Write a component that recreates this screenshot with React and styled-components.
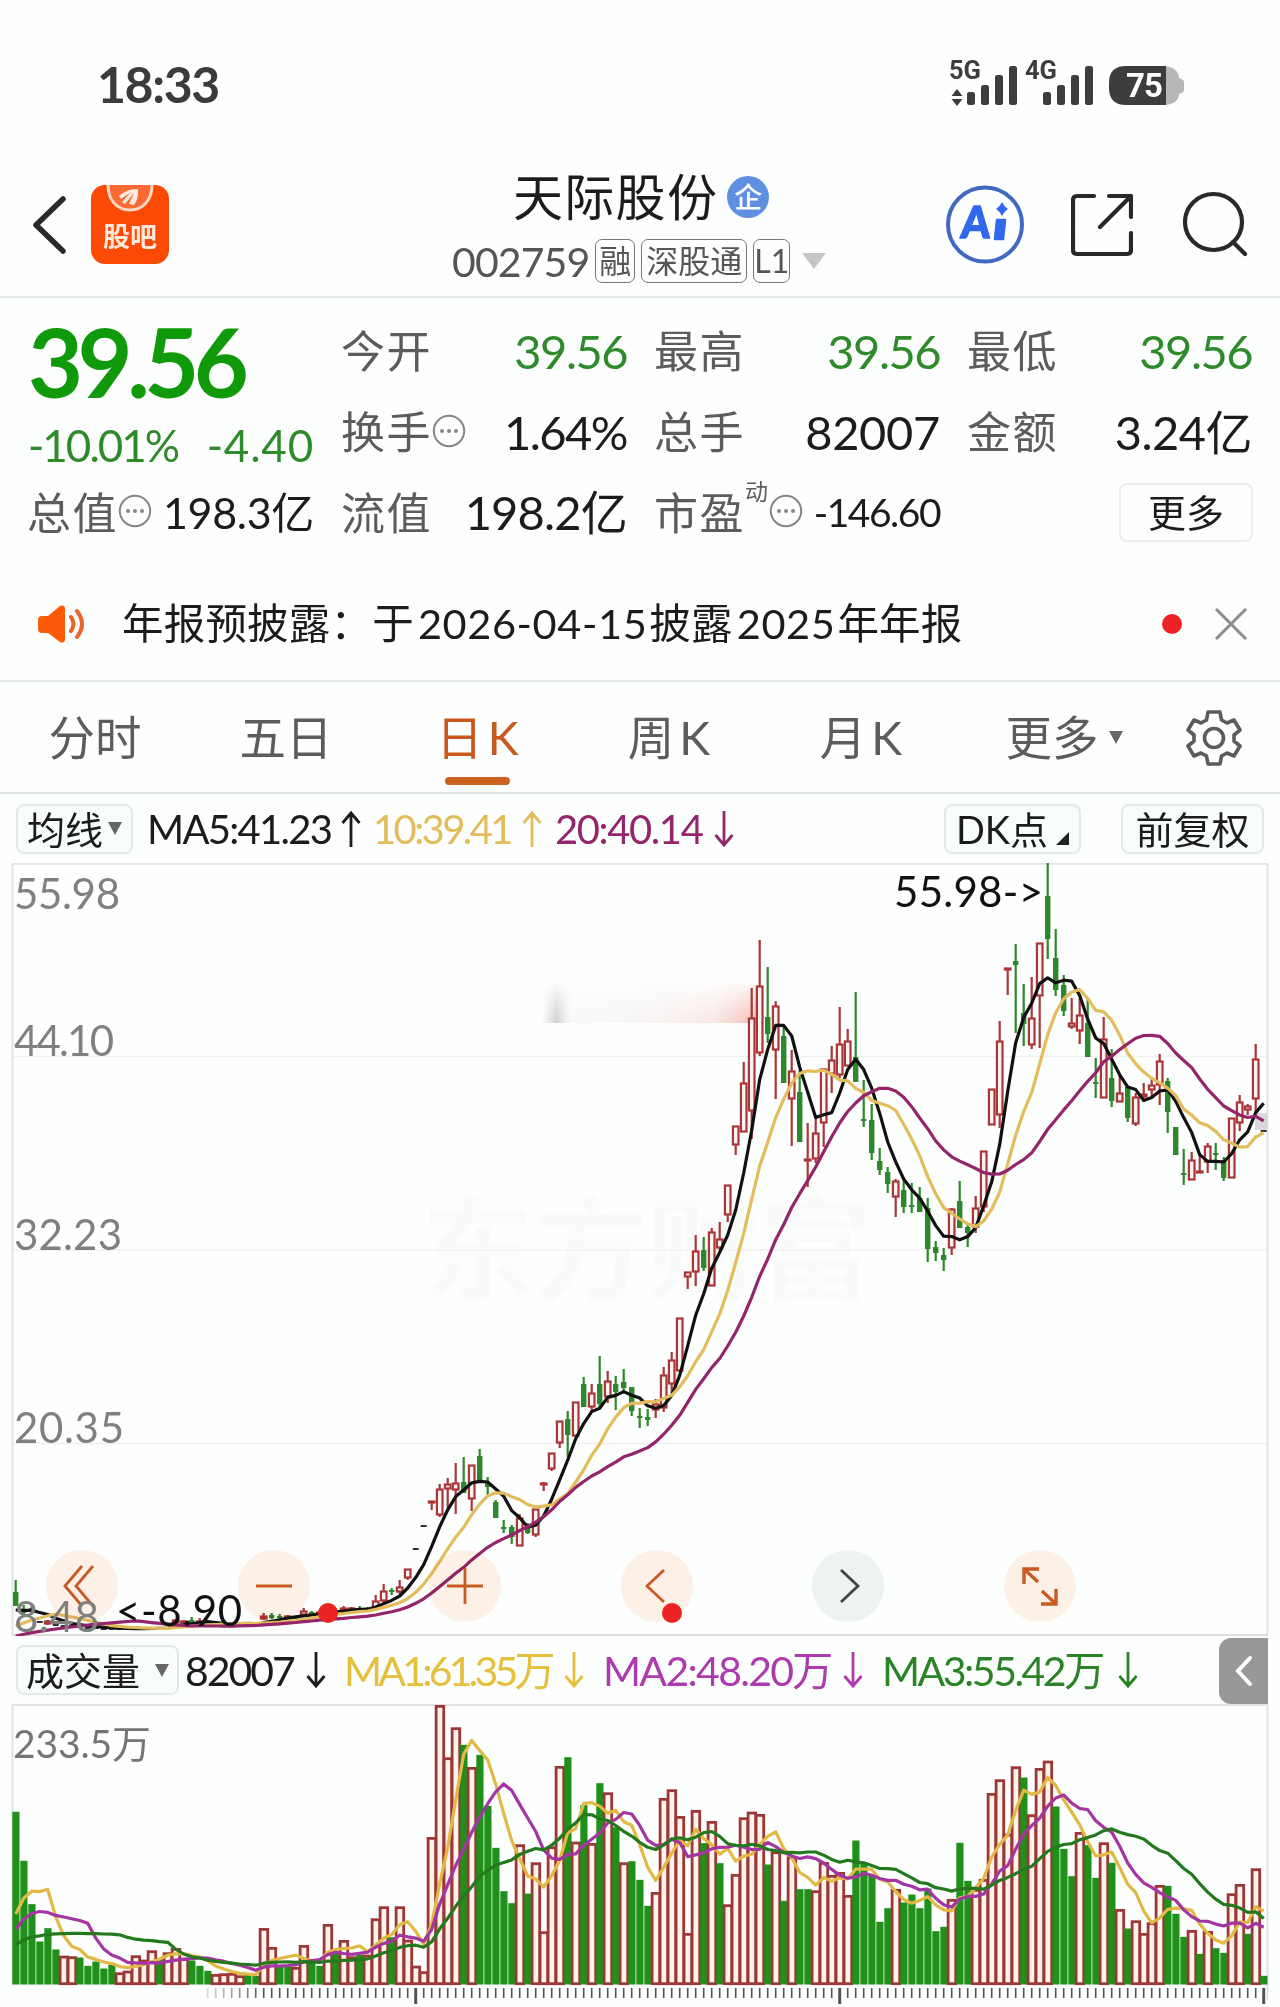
import React from "react";
import styled, {createGlobalStyle, css} from 'styled-components';

const GlobalStyle = createGlobalStyle`
  * {
    box-sizing: border-box;
  }

  body {
    margin: 0;
    background: #fdfefe;
    font-family: Lato, "Noto Sans CJK SC", sans-serif;
    color: #1c1c1c;
  }
`

const Screen = styled.main`
  width: 1280px;
  height: 2007px;
  overflow: hidden;
  display: flex;
  flex-direction: column;
  line-height: 1;
`

/* one piece of text: size, tracking, colour and weight vary */
const Text = styled.span`
  font-size: ${p => p.$size || 45}px;
  letter-spacing: ${p => p.$gap || 0}px;
  color: ${p => p.$color || '#1c1c1c'};
  font-weight: ${p => p.$weight || 400};
  line-height: 1;
  white-space: nowrap;
`

const StatusBar = styled.header`
  height: 168px;
  padding: 0 98px 0 97px;
  display: flex;
  align-items: center;
  justify-content: space-between;
`

const NavBar = styled.nav`
  height: 130px;
  display: grid;
  grid-template-columns: 91px 353px 502px 125px 112px 97px;
  border-bottom: 2px solid #e6e9e9;

  > svg {
    margin-top: 17px;
  }
`

const BackButton = styled.div`
  padding: 27px 0 0 32px;
`

const AppIcon = styled.div`
  width: 78px;
  height: 79px;
  margin-top: 17px;
  border-radius: 14px;
  background: #fb4a05;
  overflow: hidden;
  display: flex;
  flex-direction: column;
  align-items: center;
  color: #ffe9dc;
  font-size: 27px;
  font-weight: 700;

  span {
    margin-top: 8px;
    font-family: "Noto Sans CJK SC", sans-serif;
  }
`

const Title = styled.div`
  display: flex;
  flex-direction: column;
`

const TitleRow = styled.div`
  height: 62px;
  padding: 0 0 3px 69px;
  display: flex;
  align-items: center;
  gap: 9px;
`

const Badge = styled.span`
  width: 42px;
  height: 42px;
  border-radius: 50%;
  background: #5f8fe0;
  color: white;
  font-size: 28px;
  font-weight: 500;
  display: flex;
  align-items: center;
  justify-content: center;
  line-height: 1;
`

const CodeRow = styled.div`
  height: 62px;
  padding: 1px 0 0 8px;
  display: flex;
  align-items: center;
`

const Tag = styled.span`
  width: ${p => p.$width}px;
  height: 44px;
  margin-left: ${p => p.$left || 6}px;
  border: 1.5px solid #777;
  border-radius: 7px;
  color: #555;
  font-size: ${p => p.$size || 32}px;
  display: flex;
  align-items: center;
  justify-content: center;
  white-space: nowrap;
`

const Triangle = styled.i`
  width: 0;
  height: 0;
  flex: none;
  border-left: ${p => p.$w / 2}px solid transparent;
  border-right: ${p => p.$w / 2}px solid transparent;
  border-top: ${p => p.$h}px solid ${p => p.$color || '#666'};
  margin-left: ${p => p.$left || 0}px;
`

const Quote = styled.section`
  height: 262px;
  display: grid;
  grid-template-columns: 286px 285px 285px 284px;
  column-gap: 28px;
  padding: 13px 27px 0 28px;
`

const PriceColumn = styled.div`
  display: grid;
  grid-template-rows: 102px 65px 70px;
  align-items: center;
`

const StatColumn = styled.div`
  display: grid;
  grid-template-rows: 81px 81px 80px;
  align-items: center;
`

const Stat = styled.div`
  display: flex;
  align-items: center;
  justify-content: space-between;
`

const Label = styled.span`
  display: flex;
  align-items: center;
  font-size: 44px;
  letter-spacing: 1.5px;
  margin-left: -1px;
  color: #5c5c5c;
  white-space: nowrap;

  svg {
    margin-top: -3px;
  }

  sup {
    font-size: 23px;
    letter-spacing: 0;
    align-self: flex-start;
    line-height: 1;
    margin: -11px 1px 0 0;
  }
`

const MoreButton = styled.button`
  width: 134px;
  height: 59px;
  margin: 0 -1px 0 auto;
  border: 2px solid #eceeee;
  border-radius: 8px;
  background: transparent;
  font: 400 38px "Noto Sans CJK SC", sans-serif;
  color: #1c1c1c;
  padding: 0 0 3px;
  line-height: 1;
`

const Notice = styled.section`
  height: 123px;
  padding: 8px 33px 0 36px;
  display: flex;
  align-items: center;
  border-bottom: 2px solid #e6e9e9;
`

const NoticeText = styled.p`
  margin: 0 0 0 36px;
  width: 1040px;
  font-size: 41.5px;
  letter-spacing: .2px;
  white-space: nowrap;

  b {
    font-weight: 400;
    letter-spacing: ${p => p.$numberGap}px;
    margin: 0 2px 0 4px;
  }
`

const RedDot = styled.i`
  width: 20px;
  height: 20px;
  flex: none;
  border-radius: 50%;
  background: #ec2224;
`

const Tabs = styled.nav`
  height: 112px;
  padding: 0 24px 0 0;
  display: grid;
  grid-template-columns: 190px 192px 191px 192px 192px 214px 1fr;
  border-bottom: 2px solid #dfe2e2;
`

const tabActive = css`
  color: #c9581c;

  &::after {
    content: '';
    position: absolute;
    bottom: 7px;
    left: 63px;
    width: 65px;
    height: 8px;
    border-radius: 4px;
    background: #cd6120;
  }
`

const Tab = styled.div`
  position: relative;
  display: flex;
  align-items: center;
  justify-content: center;
  gap: ${p => p.$spaced ? 5 : 0}px;
  padding-top: 1px;
  font-size: 46.5px;
  color: #5c5c5c;
  white-space: nowrap;
  ${p => p.$active && tabActive}
`

const Legend = styled.div`
  height: ${p => p.$height}px;
  display: flex;
  align-items: center;
  padding: 0 16px;
  position: relative;
`

const Chip = styled.span`
  width: ${p => p.$width}px;
  height: 50px;
  flex: none;
  display: flex;
  align-items: center;
  justify-content: center;
  border: 2px solid #e3e8e9;
  border-radius: 8px;
  background: #f9fcfd;
  font-size: 38px;
  white-space: nowrap;
  margin-left: ${p => p.$left || 0}px;
`

const LegendItem = styled.span`
  width: ${p => p.$width}px;
  flex: none;
  display: flex;
  align-items: center;
  justify-content: space-between;
  margin-left: ${p => p.$left}px;
  color: ${p => p.$color || '#1c1c1c'};
  font-size: ${p => p.$size || 40}px;
  letter-spacing: ${p => p.$gap || 0}px;
  white-space: nowrap;

  svg {
    flex: none;
  }
`

const Drawer = styled.div`
  position: absolute;
  right: 12px;
  top: 2px;
  width: 49px;
  height: 66px;
  border-radius: 12px 0 0 12px;
  background: #989898;
  display: flex;
  align-items: center;
  justify-content: center;
`

const ChartArea = styled.section`
  position: relative;
  height: 773px;

  > svg {
    display: block;
  }
`

const Controls = styled.div`
  position: absolute;
  left: 46px;
  top: 687px;
  display: flex;
  gap: 119.5px;
`

/* the disc is multiplied so that the chart lines stay clear through it */
const RoundButton = styled.div`
  position: relative;
  width: 72px;
  height: 72px;

  &::before {
    content: '';
    position: absolute;
    inset: 0;
    border-radius: 50%;
    background: ${p => p.$muted ? '#f1f3f3' : '#fef1e8'};
    mix-blend-mode: multiply;
  }

  svg {
    display: block;
    position: relative;
  }

  ${RedDot} {
    position: absolute;
    left: ${p => p.$dot || 0}px;
    top: 53px;
  }
`

const NotesLayer = styled.svg`
  position: absolute;
  left: 0;
  top: 0;
  overflow: visible;
`

const VolumeArea = styled.section`
  height: 303px;

  svg {
    display: block;
  }
`

const INK = '#111'
const GOLD = '#e3bc5c'
const WINE = '#94256a'
const VIOLET = '#a436a4'
const LEAF = '#24791f'

const FIRST_X = 15.7
const STEP = 8
const xOf = (i) => FIRST_X + i * STEP

// Candles: [high, body top, body bottom, low, kind], kind 1 rise, -1 fall, 0 flat
const candles = [
    [1580, 1592, 1606, 1606, -1], [1605, 1609, 1613, 1615, -1], [1606, 1608, 1611, 1613, -1], [1620, 1621, 1622, 1623, 0],
    [1620, 1621, 1624, 1625, 1], [1623, 1624, 1625, 1625, 0], [1624, 1625, 1626, 1626, 0], [1624, 1625, 1626, 1626, 0],
    [1625, 1626, 1627, 1627, 0], [1626, 1627, 1628, 1628, 0], [1626, 1627, 1628, 1628, 0], [1627, 1628, 1629, 1629, 0],
    [1627, 1628, 1629, 1630, -1], [1627, 1628, 1629, 1630, 0], [1627, 1628, 1629, 1630, 0], [1627, 1628, 1629, 1629, 0],
    [1627, 1628, 1629, 1629, 0], [1627, 1628, 1629, 1630, 0], [1626, 1627, 1628, 1629, 0], [1625, 1627, 1628, 1629, 0],
    [1619, 1620, 1623, 1624, 1], [1620, 1621, 1623, 1625, 1], [1617, 1620, 1623, 1625, -1], [1618, 1621, 1624, 1626, 1],
    [1622, 1623, 1624, 1625, 0], [1622, 1624, 1625, 1627, 1], [1623, 1625, 1626, 1627, 1], [1623, 1625, 1626, 1627, 1],
    [1622, 1624, 1625, 1626, 0], [1622, 1624, 1625, 1625, 0], [1621, 1623, 1624, 1625, 0], [1613, 1616, 1619, 1620, 1],
    [1613, 1615, 1618, 1619, -1], [1614, 1616, 1617, 1619, -1], [1615, 1616, 1617, 1618, 1], [1616, 1617, 1617, 1618, -1],
    [1608, 1611, 1615, 1616, 1], [1611, 1612, 1614, 1615, -1], [1610, 1612, 1613, 1614, 1], [1607, 1610, 1612, 1614, 1],
    [1608, 1610, 1612, 1613, -1], [1606, 1608, 1610, 1611, 1], [1607, 1608, 1609, 1611, 1], [1606, 1608, 1609, 1611, -1],
    [1607, 1609, 1611, 1612, 1], [1595, 1601, 1608, 1610, 1], [1584, 1591, 1601, 1603, 1], [1588, 1590, 1592, 1595, -1],
    [1580, 1587, 1592, 1594, 1], [1569, 1569, 1578, 1580, 1], [1549, 1548, 1550, 1549, 0], [1526, 1525, 1527, 1526, 0],
    [1501, 1501, 1503, 1510, 1], [1484, 1489, 1515, 1517, 1], [1478, 1484, 1489, 1508, 1], [1463, 1483, 1490, 1514, 1],
    [1457, 1482, 1493, 1493, -1], [1465, 1465, 1499, 1511, 1], [1449, 1456, 1482, 1482, -1], [1477, 1483, 1487, 1495, -1],
    [1500, 1502, 1518, 1518, -1], [1520, 1527, 1529, 1533, -1], [1525, 1527, 1537, 1544, -1], [1514, 1518, 1546, 1546, 1],
    [1523, 1525, 1533, 1534, -1], [1509, 1509, 1535, 1537, 1], [1482, 1483, 1485, 1491, 1], [1453, 1453, 1469, 1471, 1],
    [1421, 1421, 1443, 1448, 1], [1411, 1419, 1435, 1457, -1], [1402, 1402, 1436, 1437, 1], [1377, 1384, 1407, 1407, -1],
    [1384, 1393, 1407, 1411, 1], [1356, 1384, 1404, 1408, -1], [1371, 1381, 1397, 1403, 1], [1376, 1384, 1392, 1410, -1],
    [1369, 1382, 1388, 1392, -1], [1387, 1387, 1411, 1416, -1], [1408, 1416, 1418, 1428, -1], [1409, 1417, 1420, 1426, -1],
    [1399, 1404, 1410, 1418, 1], [1367, 1375, 1408, 1412, 1], [1352, 1360, 1384, 1393, 1], [1318, 1318, 1371, 1371, 1],
    [1272, 1272, 1277, 1289, 1], [1235, 1251, 1272, 1286, 1], [1237, 1250, 1268, 1271, -1], [1228, 1232, 1286, 1286, 1],
    [1222, 1239, 1248, 1250, 1], [1185, 1185, 1215, 1222, 1], [1126, 1126, 1145, 1155, 1], [1062, 1083, 1132, 1132, 1],
    [988, 1018, 1111, 1139, 1], [940, 986, 1053, 1056, 1], [967, 1017, 1034, 1043, -1], [1001, 1006, 1050, 1099, 1],
    [1025, 1036, 1083, 1083, -1], [1050, 1071, 1099, 1146, 1], [1070, 1092, 1142, 1142, -1], [1123, 1159, 1161, 1187, 1],
    [1118, 1133, 1159, 1163, 1], [1068, 1069, 1123, 1147, 1], [1046, 1060, 1074, 1093, 1], [1007, 1044, 1075, 1078, 1],
    [1029, 1041, 1066, 1066, 1], [992, 1057, 1082, 1082, -1], [1080, 1119, 1121, 1127, -1], [1104, 1120, 1153, 1160, -1],
    [1148, 1161, 1170, 1175, -1], [1167, 1172, 1184, 1193, -1], [1179, 1181, 1197, 1217, 1], [1178, 1190, 1207, 1213, -1],
    [1183, 1205, 1207, 1213, -1], [1187, 1198, 1212, 1212, -1], [1198, 1208, 1249, 1262, -1], [1241, 1247, 1253, 1261, -1],
    [1248, 1255, 1260, 1271, -1], [1208, 1209, 1248, 1255, 1], [1181, 1201, 1228, 1228, -1], [1223, 1227, 1233, 1247, -1],
    [1196, 1208, 1227, 1233, 1], [1151, 1151, 1207, 1212, 1], [1089, 1089, 1125, 1125, 1], [1021, 1041, 1115, 1128, 1],
    [968, 968, 969, 995, 1], [944, 961, 965, 1033, -1], [984, 1013, 1024, 1046, -1], [977, 1018, 1045, 1049, 1],
    [943, 943, 996, 1048, 1], [863, 896, 939, 959, -1], [929, 958, 990, 996, -1], [975, 985, 1011, 1016, -1],
    [998, 1023, 1027, 1029, 1], [998, 1015, 1031, 1044, 1], [998, 1023, 1057, 1057, -1], [1058, 1082, 1084, 1098, -1],
    [1017, 1039, 1098, 1098, 1], [1049, 1078, 1101, 1107, -1], [1075, 1093, 1102, 1102, 1], [1087, 1087, 1118, 1122, -1],
    [1093, 1097, 1124, 1126, 1], [1083, 1094, 1097, 1100, 1], [1077, 1085, 1090, 1096, 1], [1054, 1061, 1085, 1105, 1],
    [1078, 1081, 1112, 1133, -1], [1127, 1127, 1155, 1155, -1], [1149, 1173, 1175, 1185, -1], [1152, 1160, 1180, 1180, 1],
    [1153, 1171, 1173, 1173, 1], [1143, 1146, 1162, 1173, 1], [1143, 1153, 1155, 1170, -1], [1157, 1160, 1178, 1181, -1],
    [1118, 1118, 1178, 1178, 1], [1095, 1102, 1123, 1131, 1], [1104, 1106, 1110, 1115, 1], [1044, 1059, 1099, 1113, 1],
    [1131, 1130, 1132, 1131, 0],
]

// closes of the sessions just before the first visible candle
const earlierCloses = [
    ...Array(10).fill(1646), ...Array(5).fill(1642), ...Array(4).fill(1611),
]

// Volumes, full scale 838 = 233.5万; negative marks a falling day
const volumes = [
    -518, -371, -241, -129, -169, -105, 86, 84, -81, -56, -69, -48, -59, 36, 41, 87, 74, 102, -79, 96,
    109, 79, -72, -56, -41, 31, 33, 34, 27, -29, -26, 169, 112, -54, -54, 52, 118, -76, -56, 181,
    -94, 133, 84, -89, 89, 198, 234, -142, 234, 134, 56, 39, 442, 838, 681, 771, -719, 652, -689, -536,
    -410, -280, -244, 420, -273, 366, 159, 414, 655, -682, 428, -538, 424, -604, 576, -472, 366, -370, -314, -236,
    277, 559, 585, 505, 154, 523, -424, 490, -364, 240, 331, 501, 518, 511, -360, 399, -251, 384, -286, -286,
    282, 367, 328, 337, 268, -432, -366, -326, -188, -229, 286, -246, -270, -229, -288, -160, -173, 256, -425, -311,
    286, 316, 574, 615, 452, 654, -621, 510, 649, 671, -534, -407, -325, 457, -418, -320, 426, -365, 226, -168,
    192, 154, 186, 298, -296, -212, -143, 163, -92, 160, -109, -95, 273, 301, -152, 348, -26,
]

const earlierVolumes = [
    67, 67, 67, 74, 74, 74, 74, 74, 74, 74, 70, 70, 70, 195, 195, 135, 135, 135, 135,
]

const VOL_BASE = 1984.5
const volY = (v) => VOL_BASE - v / 3

function movingAverage(history, values, days) {
    const all = [...history, ...values]
    return values.map((_, i) => {
        const end = i + history.length + 1
        return all.slice(end - days, end).reduce((a, b) => a + b, 0) / days
    })
}

const toPoints = (ys) => ys.map((y, i) => `${xOf(i)},${y.toFixed(1)}`).join(' ')

const closes = candles.map(([, top, bottom, , kind]) => kind > 0 ? top : kind < 0 ? bottom : (top + bottom) / 2)
const absVolumes = volumes.map(Math.abs)

const Line = ({ys, color}) => (
    <polyline points={toPoints(ys)} fill="none" stroke={color} strokeWidth="3.2" strokeLinejoin="round"/>
)

const Candle = ({i, data}) => {
    const [high, top, bottom, low, kind] = data
    const x = xOf(i)
    if (kind === 0) return <rect x={x - 3} y={top} width="6" height="2" fill="#333"/>
    if (kind < 0) return (
        <g fill="#2c882b">
            <rect x={x - 1.1} y={high} width="2.2" height={Math.max(low - high, 1)}/>
            <rect x={x - 2.7} y={top} width="5.4" height={Math.max(bottom - top, 2)}/>
        </g>
    )
    return (
        <g stroke="#a93638" strokeWidth="2.2" fill="none">
            <path d={`M${x} ${high}V${top}M${x} ${bottom}V${low}`}/>
            <rect x={x - 2.8} y={top + .5} width="5.6" height={Math.max(bottom - top - 1, 1)} fill="#fff3f1"/>
        </g>
    )
}

const AxisLabel = ({y, x = 14, width = 106, color = '#808080', size = 42, children}) => (
    <text x={x} y={y} fontSize={size} fill={color} textLength={width}>{children}</text>
)

function PriceChart() {
    return (
        <svg width="1280" height="773" viewBox="0 863 1280 773">
            <defs>
                <linearGradient id="smudge">
                    <stop offset="0" stopColor="#8a8a8a" stopOpacity="0"/>
                    <stop offset=".07" stopColor="#8a8a8a" stopOpacity=".4"/>
                    <stop offset=".14" stopColor="#ccc" stopOpacity=".1"/>
                    <stop offset=".5" stopColor="#e0c0bb" stopOpacity=".15"/>
                    <stop offset=".8" stopColor="#f0a59a" stopOpacity=".25"/>
                    <stop offset="1" stopColor="#f0705f" stopOpacity=".5"/>
                </linearGradient>
                <linearGradient id="fadeDown" x2="0" y2="1">
                    <stop offset="0" stopColor="#fff" stopOpacity=".1"/>
                    <stop offset="1" stopColor="#fff"/>
                </linearGradient>
                <mask id="smudgeMask">
                    <rect x="542" y="984" width="214" height="39" fill="url(#fadeDown)"/>
                </mask>
            </defs>
            <text x="422" y="1292" fontSize="112" fontWeight="700" fill="#f9fafa" textLength="450">东方财富</text>
            <path d="M12.5 1056.5H1267M12.5 1250H1267M12.5 1443.5H1267" stroke="#eff1f1" strokeWidth="1.5"/>
            <path d="M12.5 1636V863.8H1267.5V1636" fill="none" stroke="#e1e3e4" strokeWidth="2"/>
            <path d="M12 1635H1268" stroke="#dcdede" strokeWidth="2"/>
            <AxisLabel y={909}>55.98</AxisLabel>
            <AxisLabel y={1056} width={100}>44.10</AxisLabel>
            <AxisLabel y={1250} width={108}>32.23</AxisLabel>
            <AxisLabel y={1443} width={110}>20.35</AxisLabel>
            <rect x="542" y="984" width="214" height="39" fill="url(#smudge)" mask="url(#smudgeMask)"/>
            {candles.map((c, i) => <Candle key={i} i={i} data={c}/>)}
            <rect x="1255" y="1113" width="12" height="17" fill="#cfc6d2" opacity=".7"/>
            <Line ys={movingAverage(earlierCloses, closes, 5)} color={INK}/>
            <Line ys={movingAverage(earlierCloses, closes, 10)} color={GOLD}/>
            <Line ys={movingAverage(earlierCloses, closes, 20)} color={WINE}/>
        </svg>
    )
}

function ChartNotes() {
    return (
        <NotesLayer width="1280" height="785" viewBox="0 863 1280 785">
            <AxisLabel y={1632} width={85}>8.48</AxisLabel>
            <AxisLabel x={116} y={1626} width={126} color={INK}>{'<-8.90'}</AxisLabel>
            <AxisLabel x={894} y={907} width={149} color={INK}>{'55.98->'}</AxisLabel>
        </NotesLayer>
    )
}

function VolumeChart() {
    return (
        <svg width="1280" height="303" viewBox="0 1704 1280 303">
            <path d="M12.5 1985V1705H1267.5V2000" fill="none" stroke="#e1e3e4" strokeWidth="2"/>
            {volumes.map((v, i) => v < 0
                ? <rect key={i} x={xOf(i) - 3.4} y={volY(-v)} width="7.2" height={-v / 3} fill="#1f9019"/>
                : <rect key={i} x={xOf(i) - 3.6} y={volY(v) + 1.2} width="7.6" height={Math.max(v / 3 - 2, 1)}
                        fill="#fff3ee" stroke="#9c3836" strokeWidth="2.8"/>
            )}
            <Line ys={movingAverage(earlierVolumes, absVolumes, 5).map(volY)} color="#e2b944"/>
            <Line ys={movingAverage(earlierVolumes, absVolumes, 10).map(volY)} color={VIOLET}/>
            <Line ys={movingAverage(earlierVolumes, absVolumes, 20).map(volY)} color={LEAF}/>
            <AxisLabel x={13} y={1758} width={138} size={39} color="#757575">233.5万</AxisLabel>
            {volumes.map((_, i) => i > 23 && (
                [50, 103, 156].includes(i)
                    ? <rect key={i} x={xOf(i) - 1.5} y="1988" width="3" height="16" fill="#555"/>
                    : <rect key={i} x={xOf(i) - .8} y="1988" width="1.6" height="10" fill="#555"
                            opacity={Math.min(1, (i - 22) / 9)}/>
            ))}
        </svg>
    )
}

const Arrow = ({up}) => (
    <svg width="20" height="38" viewBox="0 0 20 38" fill="none" stroke="currentColor" strokeWidth="2.8">
        {up ? <path d="M10 37V3M1.5 13L10 3l8.500 10"/> : <path d="M10 1v34M1.500 25L10 35l8.500-10"/>}
    </svg>
)

const Info = () => (
    <svg width="34" height="34" viewBox="0 0 34 34" fill="none" stroke="#858585" strokeWidth="2">
        <circle cx="17" cy="17" r="15.200"/>
        <path d="M10 17h.01M17 17h.01M24 17h.01" strokeWidth="4" strokeLinecap="round"/>
    </svg>
)

const Signal = ({x}) => (
    <g fill="#3d3d3d">
        <rect x={x} y="39" width="8" height="13" rx="2.500"/>
        <rect x={x + 14} y="32" width="8" height="20" rx="2.500"/>
        <rect x={x + 28} y="22" width="8" height="30" rx="2.500"/>
        <rect x={x + 42} y="13" width="8" height="39" rx="2.500"/>
    </g>
)

const StatusIcons = () => (
    <svg width="238" height="60" viewBox="948 53 238 60" style={{marginRight: -4}}>
        <g transform="translate(0 52)">
            <g fill="#3d3d3d" fontSize="25" fontWeight="700" fontFamily="Roboto">
                <text x="949" y="26" textLength="32" lengthAdjust="spacingAndGlyphs">5G</text>
                <text x="1025" y="26" textLength="32" lengthAdjust="spacingAndGlyphs">4G</text>
                <path d="M957 36l5.500 7h-11zM957 53l5.500-7h-11z"/>
            </g>
            <Signal x={967}/>
            <Signal x={1043}/>
            <path d="M1163 13c10 0 16 5 16 12 3 1 5 2 5 4v8c0 2-2 3-5 4 0 7-6 11-16 11z" fill="#b7b7b7"/>
            <path d="M1166 13h-40q-17 0-17 17v5q0 17 17 17h40z" fill="#3d3d3d"/>
            <text x="1126" y="44" fill="white" fontSize="33" fontWeight="700" fontFamily="Roboto"
                  textLength="37">75</text>
        </g>
    </svg>
)

const AiIcon = () => (
    <svg width="78" height="79" viewBox="0 0 78 79">
        <circle cx="39" cy="39.500" r="37" fill="none" stroke="#4169c0" strokeWidth="4"/>
        <text x="18" y="53.500" fontSize="44" fontWeight="900" fill="#3268ee" stroke="#3268ee" strokeWidth="1.500"
              strokeLinejoin="round" textLength="29" lengthAdjust="spacingAndGlyphs" transform="skewX(-4)">A</text>
        <path d="M51 35h8l-2 19h-8z" fill="#3268ee" stroke="#3268ee" strokeWidth="2.500" strokeLinejoin="round"/>
        <path d="M56 17q2 4.500 6 7-4 2.500-6 7-2-4.500-6-7 4-2.500 6-7z" fill="#3268ee"/>
    </svg>
)

const ShareIcon = () => (
    <svg width="62" height="79" viewBox="0 0 62 79" fill="none" stroke="#292929" strokeWidth="4.200" strokeLinecap="round"
         strokeLinejoin="round">
        <path d="M23 11H6q-4 0-4 4v50q0 4 4 4h50q4 0 4-4V48M38 11h22v21M60 11L29 42"/>
    </svg>
)

const SearchIcon = () => (
    <svg width="66" height="79" viewBox="0 0 66 79" fill="none" stroke="#292929" strokeWidth="4.200" strokeLinecap="round">
        <ellipse cx="30.500" cy="37" rx="28.500" ry="28"/>
        <path d="M50 57l12 12"/>
    </svg>
)

const Glyph = ({d, color = '#c85a22', width = 2.8}) => (
    <svg width="72" height="72" viewBox="0 0 72 72" fill="none" stroke={color} strokeWidth={width}>
        <path d={d}/>
    </svg>
)

const Gear = () => (
    <svg width="56" height="58" viewBox="0 0 56 58" fill="none" stroke="#5c5c5c" strokeWidth="3.600"
         strokeLinejoin="round">
        <path d="M22 3h12l1.500 8 5.500 3 7-3 6 10-6 5v6l6 5-6 10-7-3-5.500 3-1.500 8H22l-1.500-8-5.500-3-7 3-6-10 6-5v-6l-6-5 6-10 7 3 5.500-3z"/>
        <circle cx="28" cy="29" r="9.500"/>
    </svg>
)

const Speaker = () => (
    <svg width="50" height="40" viewBox="0 0 50 40" fill="none" stroke="#e9652c" strokeWidth="4" strokeLinecap="round">
        <path d="M2 16q0-4 4-4h6L24 2q5-2 5 3v30q0 5-5 3L12 29H6q-4 0-4-4z" fill="#fb5a08" stroke="none"/>
        <path d="M35 13q5 7 0 14M41 7q10 13 0 26"/>
    </svg>
)

const stats = [
    [
        {label: '今开', value: '39.56', green: true},
        {label: '换手', info: true, value: '1.64%'},
        {label: '流值', value: '198.2亿', gap: -.8},
    ],
    [
        {label: '最高', value: '39.56', green: true},
        {label: '总手', value: '82007', gap: -.3},
        {label: '市盈', sup: '动', info: true, value: '-146.60', small: true},
    ],
    [
        {label: '最低', value: '39.56', green: true},
        {label: '金额', value: '3.24亿', gap: -.5},
    ],
]

const tabs = [['分时'], ['五日'], ['日', 'K'], ['周', 'K'], ['月', 'K']]

export default function App() {
    return (
        <Screen>
            <GlobalStyle/>
            <StatusBar>
                <Text $size={50} $weight={700} $color="#3b3b3b" $gap={-1.4}>18:33</Text>
                <StatusIcons/>
            </StatusBar>

            <NavBar>
                <BackButton>
                    <svg width="36" height="60" viewBox="0 0 36 60" fill="none" stroke="#292929" strokeWidth="5.500"
                         strokeLinecap="round" strokeLinejoin="round">
                        <path d="M31 4L4 30l27 26"/>
                    </svg>
                </BackButton>
                <AppIcon>
                    <svg width="50" height="29" viewBox="0 0 50 29">
                        <path d="M3 0c0 15 9 25 22 25S47 15 47 0" fill="#f96a35" stroke="#ffd9c6" strokeWidth="3"/>
                        <path d="M14 11Q23 3 33 4q1 9-4 16l-5-1 5-11-9 11-3-2 9-10-10 7z" fill="#ffeade"/>
                    </svg>
                    <span>股吧</span>
                </AppIcon>
                <Title>
                    <TitleRow>
                        <Text $size={50} $gap={1.3}>天际股份</Text>
                        <Badge>企</Badge>
                    </TitleRow>
                    <CodeRow>
                        <Text $size={41} $gap={-.9} $color="#555">002759</Text>
                        <Tag $width={40}>融</Tag>
                        <Tag $width={106}>深股通</Tag>
                        <Tag $width={37}>L1</Tag>
                        <Triangle $w={24} $h={16} $left={12} $color="#c6c6c6"/>
                    </CodeRow>
                </Title>
                <AiIcon/>
                <ShareIcon/>
                <SearchIcon/>
            </NavBar>

            <Quote>
                <PriceColumn>
                    <Text $size={95} $weight={700} $gap={-5.5} $color="#109a0b">39.56</Text>
                    <Stat>
                        <Text $size={44} $gap={-2} $color="#2f8a2c">-10.01%</Text>
                        <Text $size={44} $gap={.8} $color="#2f8a2c">-4.40</Text>
                    </Stat>
                    <Stat>
                        <Label>总值<Info/></Label>
                        <Text $size={43} $gap={-.3}>198.3亿</Text>
                    </Stat>
                </PriceColumn>
                {stats.map((column, c) => (
                    <StatColumn key={c}>
                        {column.map((s) => (
                            <Stat key={s.label}>
                                <Label>{s.label}{s.sup && <sup>{s.sup}</sup>}{s.info && <Info/>}</Label>
                                <Text $size={s.small ? 39 : 47} $gap={s.gap || -1.5}
                                      $color={s.green ? '#2f8a2c' : undefined}>{s.value}</Text>
                            </Stat>
                        ))}
                        {c === 2 && <MoreButton>更多</MoreButton>}
                    </StatColumn>
                ))}
            </Quote>

            <Notice>
                <Speaker/>
                <NoticeText $numberGap={.6}>年报预披露：于<b>2026-04-15</b>披露<b>2025</b>年年报</NoticeText>
                <RedDot/>
                <svg width="32" height="32" viewBox="0 0 32 32" stroke="#8c8c8c" strokeWidth="3"
                     style={{marginLeft: 33}}>
                    <path d="M1 1l30 30M31 1L1 31"/>
                </svg>
            </Notice>

            <Tabs>
                {tabs.map(([name, unit]) => (
                    <Tab key={name} $active={name === '日'} $spaced={!!unit}>
                        <span>{name}</span>{unit && <span>{unit}</span>}
                    </Tab>
                ))}
                <Tab>更多<Triangle $w={15} $h={13} $left={10}/></Tab>
                <Tab><Gear/></Tab>
            </Tabs>

            <Legend $height={69}>
                <Chip $width={117}>均线<Triangle $w={15} $h={13} $left={5}/></Chip>
                <LegendItem $left={14} $width={214} $gap={-1.7}>MA5:41.23<Arrow up/></LegendItem>
                <LegendItem $left={12} $width={169} $gap={-2.6} $color={GOLD}>10:39.41<Arrow up/></LegendItem>
                <LegendItem $left={13} $width={179} $gap={-1.4} $color={WINE}>20:40.14<Arrow/></LegendItem>
                <Chip $width={137} $left={210}>DK点
                    <svg width="13" height="13" viewBox="0 0 13 13" style={{margin: '20px 0 0 8px'}}>
                        <path d="M13 0v13H0z" fill="#222"/>
                    </svg>
                </Chip>
                <Chip $width={143} $left={40}>前复权</Chip>
            </Legend>

            <ChartArea>
                <PriceChart/>
                <Controls>
                    <RoundButton><Glyph d="M36 16L19 36l17 20M47 16L30 36l17 20"/></RoundButton>
                    <RoundButton $dot={80}><Glyph d="M18 36h36"/><RedDot/></RoundButton>
                    <RoundButton><Glyph d="M18 36h36M36 18v36"/></RoundButton>
                    <RoundButton $dot={41}><Glyph d="M43 20L26 36l17 16"/><RedDot/></RoundButton>
                    <RoundButton $muted><Glyph d="M29 20l17 16-17 16" color="#444"/></RoundButton>
                    <RoundButton><Glyph d="M20 34V19h15M20 19l14 13M52 39v15H37M52 54L38 41" width={3.4}/></RoundButton>
                </Controls>
                <ChartNotes/>
            </ChartArea>

            <Legend $height={68}>
                <Chip $width={163}>成交量<Triangle $w={15} $h={13} $left={15}/></Chip>
                <LegendItem $left={6} $width={141} $size={41} $gap={-2}>82007<Arrow/></LegendItem>
                <LegendItem $left={18} $width={240} $size={41} $gap={-3.8} $color="#e6bf3c">MA1:61.35万<Arrow/></LegendItem>
                <LegendItem $left={19} $width={260} $size={41} $gap={-1.7} $color="#ad3bad">MA2:48.20万<Arrow/></LegendItem>
                <LegendItem $left={19} $width={256} $size={41} $gap={-2.5} $color="#2a8426">MA3:55.42万<Arrow/></LegendItem>
                <Drawer>
                    <svg width="18" height="32" viewBox="0 0 18 32" fill="none" stroke="white" strokeWidth="4"
                         strokeLinecap="round">
                        <path d="M15 3L3 16l12 13"/>
                    </svg>
                </Drawer>
            </Legend>

            <VolumeArea><VolumeChart/></VolumeArea>
        </Screen>
    )
}
